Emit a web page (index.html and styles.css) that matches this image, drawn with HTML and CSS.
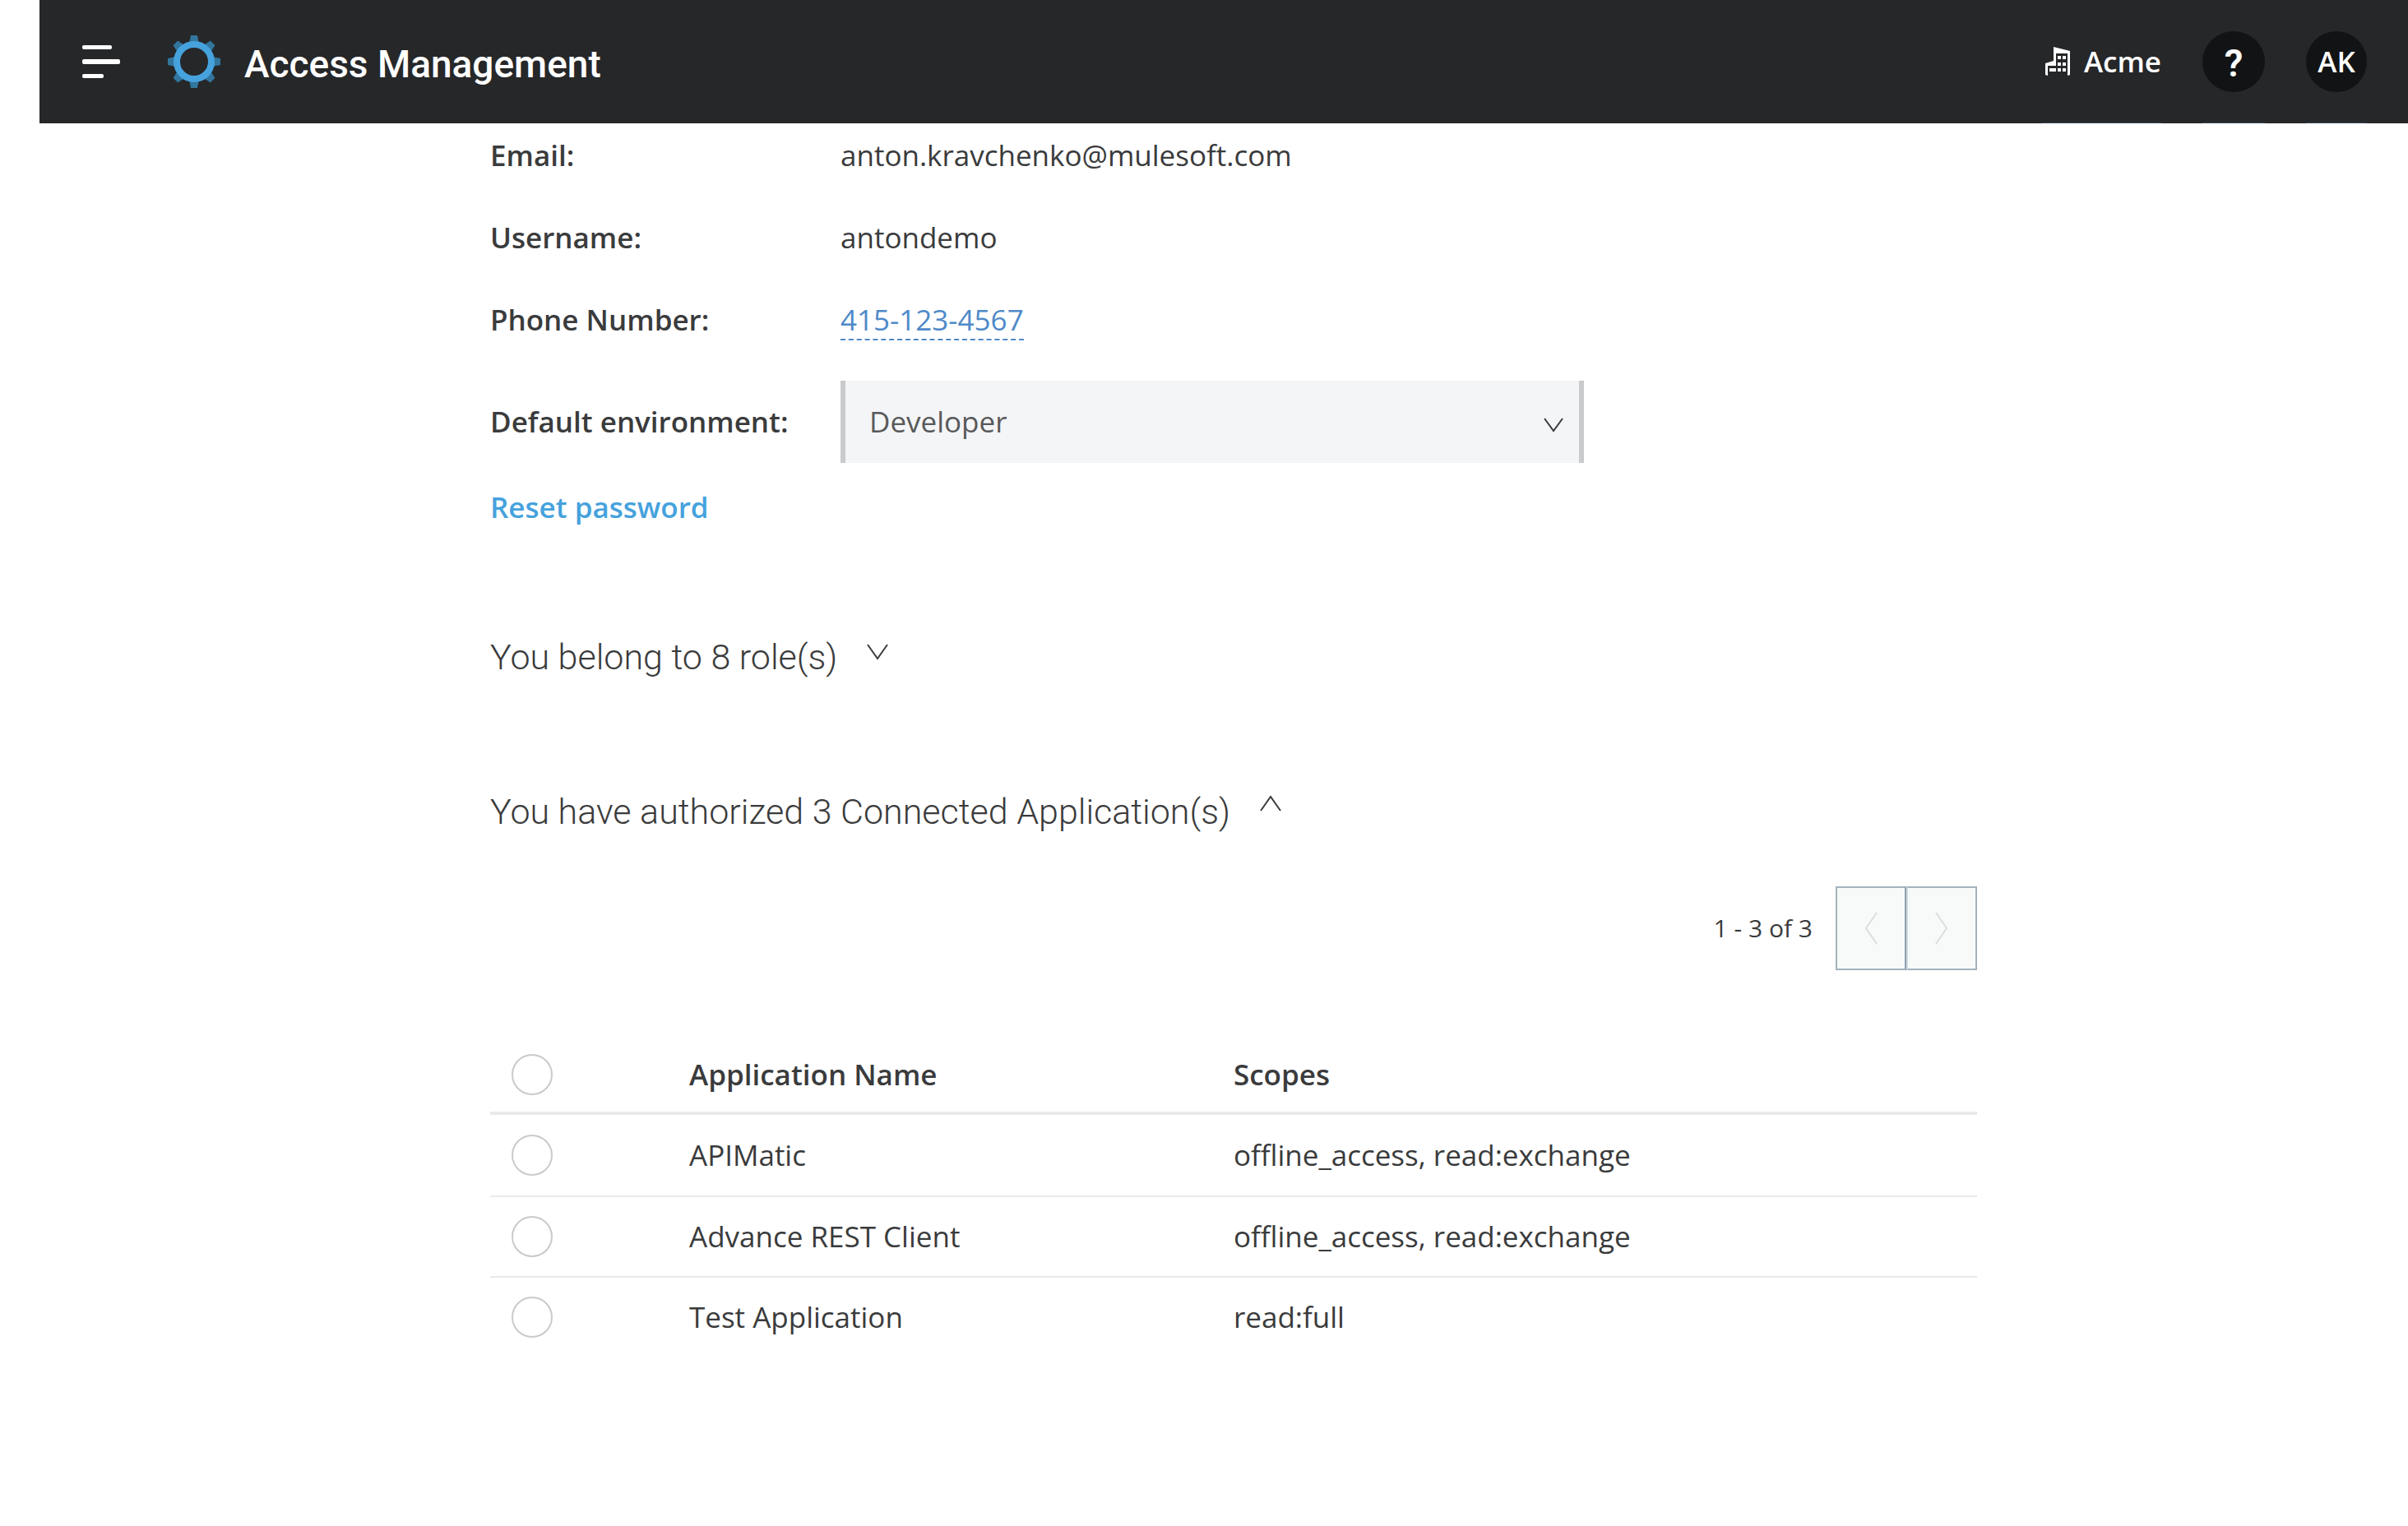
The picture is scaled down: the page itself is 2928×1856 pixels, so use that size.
FILE: index.html
```html
<!DOCTYPE html>
<html lang="en">
<head>
<meta charset="utf-8">
<meta name="viewport" content="width=device-width, initial-scale=1">
<title>Access Management</title>
<link rel="stylesheet" href="styles.css">
</head>
<body>
<header class="topbar">
  <button class="menu-button" type="button" aria-label="Open navigation">
    <svg class="menu-icon" viewBox="0 0 46 40" aria-hidden="true"><rect width="36" height="5" rx="2"/><rect y="17" width="46" height="6" rx="2"/><rect y="35" width="26" height="5" rx="2"/></svg>
  </button>
  <a class="brand" href="#">
    <svg class="brand-icon" viewBox="-32 -32 64 64" aria-hidden="true">
      <g class="gear-teeth">
        <path d="M-6-22L-4-32H4L6-22Z"/>
        <path d="M-6-22L-4-32H4L6-22Z" transform="rotate(45)"/>
        <path d="M-6-22L-4-32H4L6-22Z" transform="rotate(90)"/>
        <path d="M-6-22L-4-32H4L6-22Z" transform="rotate(135)"/>
        <path d="M-6-22L-4-32H4L6-22Z" transform="rotate(180)"/>
        <path d="M-6-22L-4-32H4L6-22Z" transform="rotate(225)"/>
        <path d="M-6-22L-4-32H4L6-22Z" transform="rotate(270)"/>
        <path d="M-6-22L-4-32H4L6-22Z" transform="rotate(315)"/>
      </g>
      <circle class="gear-ring" r="21"/>
    </svg>
    <span class="brand-name">Access Management</span>
  </a>
  <nav class="account" aria-label="Account">
    <button class="account-item org-button" type="button">
      <svg class="org-icon" viewBox="0 0 30 35" aria-hidden="true">
        <path fill-rule="evenodd" d="M0 20L10 17V0L30 5V34L27 35V8H13V23H3V35L0 34Z"/>
        <path d="M15 11h4v4h-4zM21 11h4v4h-4zM15 19h4v4h-4zM21 19h4v4h-4zM5 26h8v4h-8zM15 26h4v4h-4zM21 26h4v4h-4z"/>
      </svg>
      <span>Acme</span>
    </button>
    <button class="account-item" type="button" aria-label="Help"><span class="disc help">?</span></button>
    <button class="account-item" type="button"><span class="disc">AK</span></button>
  </nav>
</header>

<main class="content">
  <dl class="profile">
    <div class="profile-row"><dt>Email:</dt><dd>anton.kravchenko@mulesoft.com</dd></div>
    <div class="profile-row"><dt>Username:</dt><dd>antondemo</dd></div>
    <div class="profile-row"><dt>Phone Number:</dt><dd><a class="editable" href="#">415-123-4567</a></dd></div>
    <div class="profile-row env-row">
      <dt><label for="environment">Default environment:</label></dt>
      <dd class="select-box">
        <select id="environment"><option>Developer</option></select>
        <svg class="select-arrow" viewBox="0 0 24 18" aria-hidden="true"><path d="M1 1L12 16L23 1"/></svg>
      </dd>
    </div>
  </dl>
  <a class="reset-link" href="#">Reset password</a>

  <h2 class="section-title"><button type="button" aria-expanded="false">You belong to 8 role(s)
    <svg class="toggle-icon" viewBox="0 0 26 20" aria-hidden="true"><path d="M1 1L13 18L25 1"/></svg></button></h2>

  <h2 class="section-title"><button type="button" aria-expanded="true">You have authorized 3 Connected Application(s)
    <svg class="toggle-icon" viewBox="0 0 26 20" aria-hidden="true"><path d="M1 19L13 2L25 19"/></svg></button></h2>

  <div class="pager">
    <span>1 - 3 of 3</span>
    <div class="pager-buttons">
      <button type="button" aria-label="Previous page" disabled><svg viewBox="0 0 16 40" aria-hidden="true"><path d="M15 1L2 20L15 39"/></svg></button>
      <button type="button" aria-label="Next page" disabled><svg viewBox="0 0 16 40" aria-hidden="true"><path d="M1 1L14 20L1 39"/></svg></button>
    </div>
  </div>

  <table class="apps">
    <colgroup><col class="col-check"><col class="col-name"><col></colgroup>
    <thead>
      <tr><th><input type="checkbox" aria-label="Select all applications"></th><th scope="col">Application Name</th><th scope="col">Scopes</th></tr>
    </thead>
    <tbody>
      <tr><td><input type="checkbox" id="app-1"></td><td><label for="app-1">APIMatic</label></td><td>offline_access, read:exchange</td></tr>
      <tr><td><input type="checkbox" id="app-2"></td><td><label for="app-2">Advance REST Client</label></td><td>offline_access, read:exchange</td></tr>
      <tr><td><input type="checkbox" id="app-3"></td><td><label for="app-3">Test Application</label></td><td>read:full</td></tr>
    </tbody>
  </table>
</main>
</body>
</html>
```
FILE: styles.css
```css
* {
  box-sizing: border-box;
}

body {
  margin: 0;
  padding-left: 48px;
  background: #fff;
  color: #3a3b3c;
  font-family: "Open Sans", "Noto Sans", sans-serif;
  font-size: 35px;
  line-height: 48px;
}

button,
select,
input {
  margin: 0;
  padding: 0;
  border: 0;
  background: none;
  color: inherit;
  font: inherit;
}

svg {
  display: block;
  flex: none;
}

/* Top bar */

.topbar {
  display: flex;
  align-items: center;
  height: 150px;
  padding: 0 50px 0 52px;
  background: #262729;
  color: #fff;
}

.menu-icon {
  width: 46px;
  height: 40px;
  fill: #fff;
}

.brand {
  display: flex;
  align-items: center;
  gap: 29px;
  margin-left: 58px;
  color: #fff;
  text-decoration: none;
}

.brand-icon {
  width: 64px;
  height: 64px;
}

.gear-teeth {
  fill: #32759d;
}

.gear-ring {
  fill: #262729;
  stroke: #46a2dd;
  stroke-width: 8;
}

.brand-name {
  padding-top: 6px;
  font-family: Roboto, sans-serif;
  font-size: 46px;
  font-weight: 500;
}

.account {
  display: flex;
  align-self: stretch;
  gap: 50px;
  margin-left: auto;
}

.account-item {
  display: flex;
  align-items: center;
  border-bottom: 1px solid #35495a;
  font-weight: 600;
}

.org-button {
  gap: 17px;
  padding-left: 5px;
}

.org-icon {
  width: 30px;
  height: 35px;
  fill: #fff;
}

.disc {
  display: grid;
  place-items: center;
  width: 74px;
  height: 74px;
  border-radius: 50%;
  background: #121315;
}

.help {
  width: 76px;
  padding-top: 4px;
  font-family: Roboto, sans-serif;
  font-size: 46px;
}

/* Profile */

.content {
  max-width: 1832px;
  margin: 0 auto;
  padding: 15px 0 80px 24px;
}

.profile {
  display: grid;
  gap: 52px;
  margin: 0;
}

.profile-row {
  display: grid;
  grid-template-columns: 426px minmax(0, 904px);
  align-items: center;
}

.profile dt {
  font-weight: 600;
}

.profile dd {
  margin: 0;
}

.editable {
  border-bottom: 2px dashed #4f8ac9;
  color: #4f8ac9;
  text-decoration: none;
}

.env-row {
  margin-top: -2px;
}

.select-box {
  position: relative;
}

.select-box select {
  appearance: none;
  display: block;
  width: 100%;
  height: 100px;
  padding: 0 80px 0 29px;
  border: solid #c9cacc;
  border-width: 0 6px;
  border-radius: 0;
  background: #f4f5f7;
  color: #58595a;
}

.select-arrow {
  position: absolute;
  top: 45px;
  right: 25px;
  width: 24px;
  height: 18px;
  pointer-events: none;
}

.select-arrow,
.toggle-icon,
.pager svg {
  fill: none;
  stroke: #3a3b3c;
  stroke-width: 2;
}

.reset-link {
  display: block;
  width: fit-content;
  margin-top: 32px;
  color: #46a2dd;
  font-weight: 600;
  line-height: 44px;
  text-decoration: none;
}

/* Expandable sections */

.section-title {
  margin: 132px 0 0;
  font-family: Roboto, sans-serif;
  font-size: 43px;
  font-weight: 300;
  line-height: 56px;
}

.section-title button {
  display: flex;
  align-items: flex-start;
  gap: 36px;
}

.toggle-icon {
  width: 26px;
  height: 20px;
  margin-top: 12px;
}

[aria-expanded="true"] .toggle-icon {
  margin-top: 8px;
}

.pager {
  display: flex;
  align-items: center;
  justify-content: flex-end;
  gap: 28px;
  margin-top: 63px;
  font-size: 30px;
}

.pager-buttons {
  display: flex;
}

.pager button {
  display: grid;
  place-items: center;
  width: 86px;
  height: 102px;
  border: 2px solid #a3b3bd;
  background: #f8faf9;
}

.pager button:first-child {
  border-right-color: #8ba0b0;
}

.pager button:last-child {
  border-left-color: #d3dbe0;
}

.pager svg {
  width: 16px;
  height: 40px;
  stroke: #dcdedd;
}

/* Applications table */

.apps {
  width: 100%;
  margin-top: 82px;
  border-collapse: separate;
  border-spacing: 0;
  table-layout: fixed;
}

.col-check {
  width: 216px;
}

.col-name {
  width: 662px;
}

.apps th,
.apps td {
  height: 98px;
  padding: 0 26px;
  border-bottom: 2px solid #e8e9ea;
  text-align: left;
  vertical-align: middle;
}

.apps th {
  height: 94px;
  border-bottom-width: 4px;
  font-weight: 600;
}

.apps tbody tr:first-child td {
  height: 100px;
}

.apps tbody tr:last-child td {
  border-bottom-color: transparent;
}

.apps input {
  appearance: none;
  display: block;
  width: 50px;
  height: 50px;
  border: 2px solid #c9cacb;
  border-radius: 50%;
}
```
